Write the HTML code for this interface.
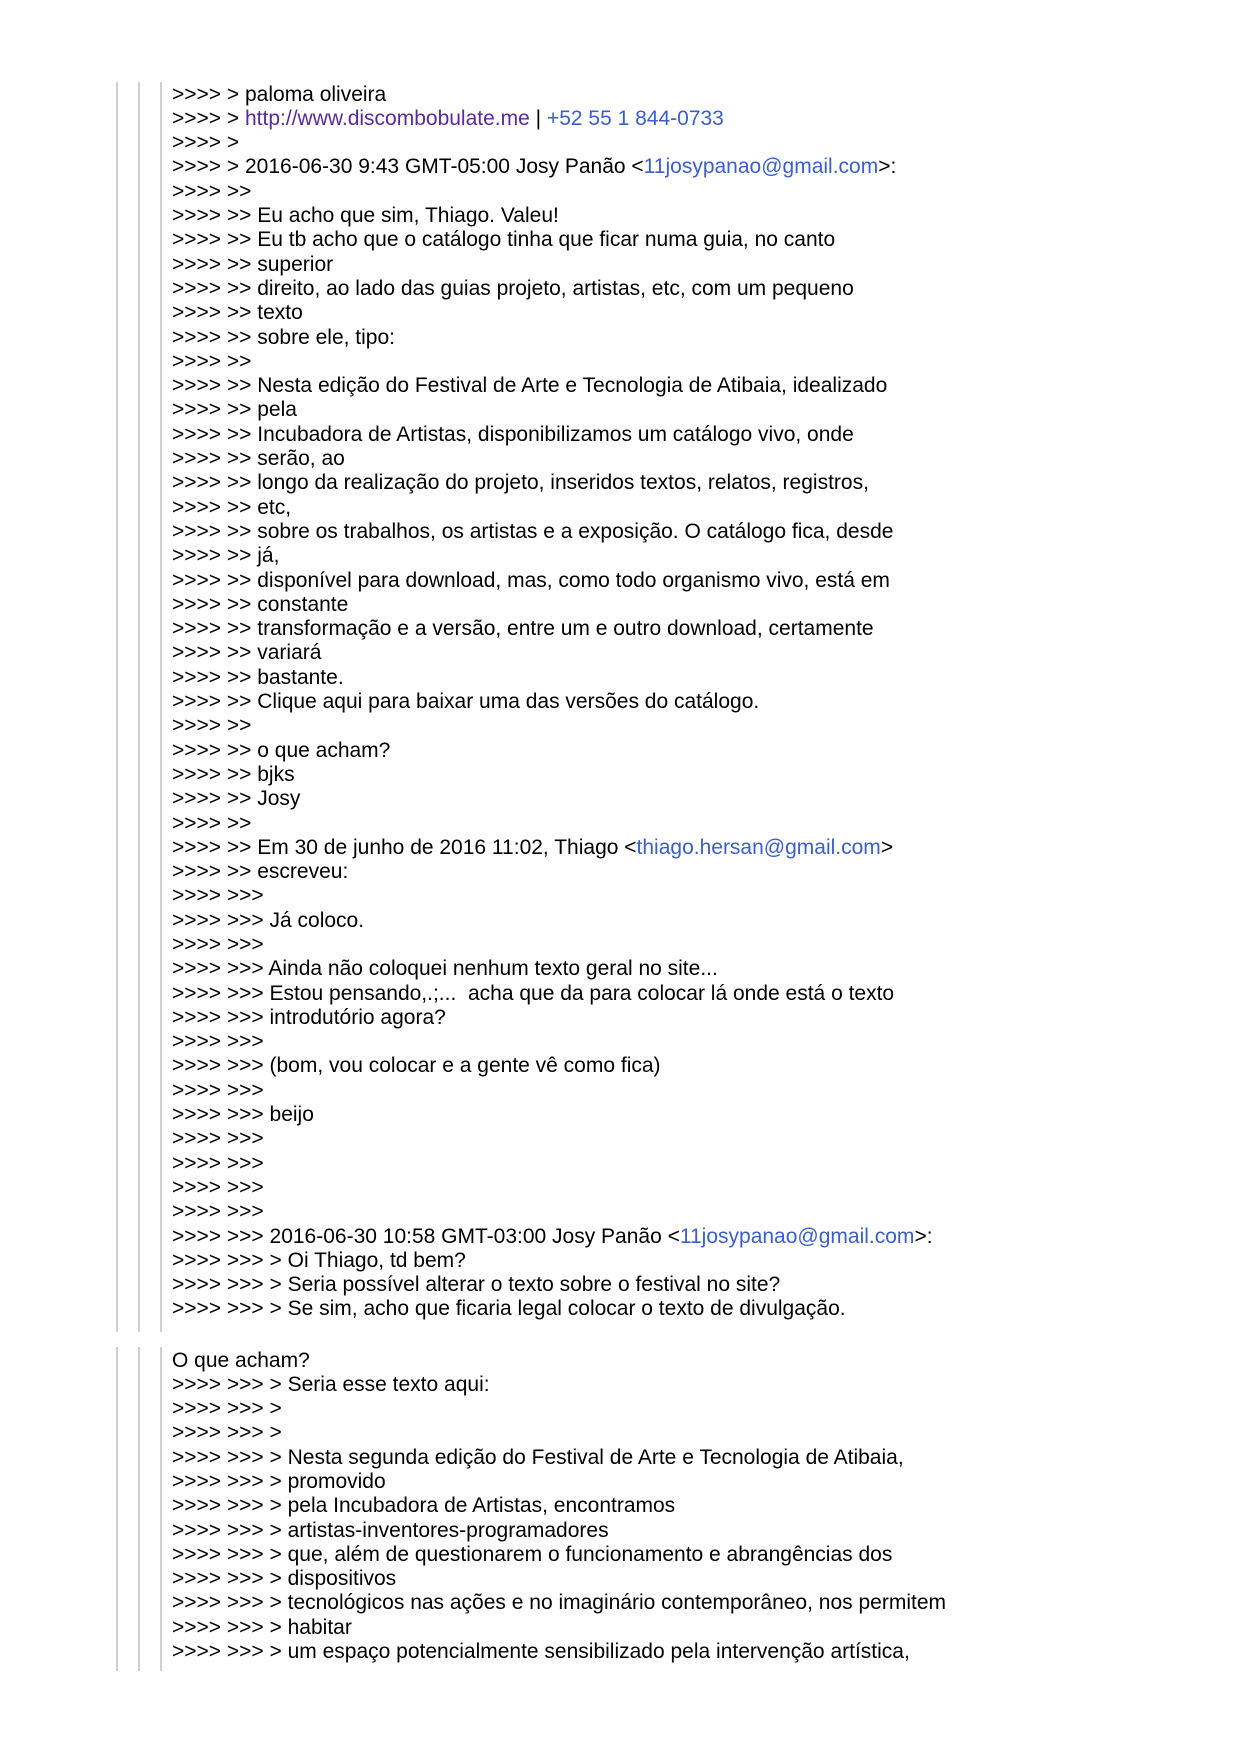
<!DOCTYPE html>
<html><head><meta charset="utf-8">
<style>
html,body{margin:0;padding:0;background:#fff;}
body{width:1240px;height:1753px;position:relative;overflow:hidden;font-family:"Liberation Sans",Arial,sans-serif;font-size:21px;color:#000;}
.bar{position:absolute;width:2px;background:#d0d0d0;}
.blk{position:absolute;left:172px;white-space:pre;}
.b1{top:82.6px;line-height:24.3px;}
.b2{top:1348.5px;line-height:24.3px;}
a{color:#3a5fcd;text-decoration:none;}
a.v{color:#5a2a9a;}
</style></head><body>
<div class="bar" style="left:116px;top:82px;height:1250px"></div>
<div class="bar" style="left:138px;top:82px;height:1250px"></div>
<div class="bar" style="left:160px;top:82px;height:1250px"></div>
<div class="bar" style="left:116px;top:1347px;height:324px"></div>
<div class="bar" style="left:138px;top:1347px;height:324px"></div>
<div class="bar" style="left:160px;top:1347px;height:324px"></div>
<div class="blk b1">&gt;&gt;&gt;&gt; &gt; paloma oliveira
&gt;&gt;&gt;&gt; &gt; <a class="v">http://www.discombobulate.me</a> | <a>+52 55 1 844-0733</a>
&gt;&gt;&gt;&gt; &gt;
&gt;&gt;&gt;&gt; &gt; 2016-06-30 9:43 GMT-05:00 Josy Panão &lt;<a>11josypanao@gmail.com</a>&gt;:
&gt;&gt;&gt;&gt; &gt;&gt;
&gt;&gt;&gt;&gt; &gt;&gt; Eu acho que sim, Thiago. Valeu!
&gt;&gt;&gt;&gt; &gt;&gt; Eu tb acho que o catálogo tinha que ficar numa guia, no canto
&gt;&gt;&gt;&gt; &gt;&gt; superior
&gt;&gt;&gt;&gt; &gt;&gt; direito, ao lado das guias projeto, artistas, etc, com um pequeno
&gt;&gt;&gt;&gt; &gt;&gt; texto
&gt;&gt;&gt;&gt; &gt;&gt; sobre ele, tipo:
&gt;&gt;&gt;&gt; &gt;&gt;
&gt;&gt;&gt;&gt; &gt;&gt; Nesta edição do Festival de Arte e Tecnologia de Atibaia, idealizado
&gt;&gt;&gt;&gt; &gt;&gt; pela
&gt;&gt;&gt;&gt; &gt;&gt; Incubadora de Artistas, disponibilizamos um catálogo vivo, onde
&gt;&gt;&gt;&gt; &gt;&gt; serão, ao
&gt;&gt;&gt;&gt; &gt;&gt; longo da realização do projeto, inseridos textos, relatos, registros,
&gt;&gt;&gt;&gt; &gt;&gt; etc,
&gt;&gt;&gt;&gt; &gt;&gt; sobre os trabalhos, os artistas e a exposição. O catálogo fica, desde
&gt;&gt;&gt;&gt; &gt;&gt; já,
&gt;&gt;&gt;&gt; &gt;&gt; disponível para download, mas, como todo organismo vivo, está em
&gt;&gt;&gt;&gt; &gt;&gt; constante
&gt;&gt;&gt;&gt; &gt;&gt; transformação e a versão, entre um e outro download, certamente
&gt;&gt;&gt;&gt; &gt;&gt; variará
&gt;&gt;&gt;&gt; &gt;&gt; bastante.
&gt;&gt;&gt;&gt; &gt;&gt; Clique aqui para baixar uma das versões do catálogo.
&gt;&gt;&gt;&gt; &gt;&gt;
&gt;&gt;&gt;&gt; &gt;&gt; o que acham?
&gt;&gt;&gt;&gt; &gt;&gt; bjks
&gt;&gt;&gt;&gt; &gt;&gt; Josy
&gt;&gt;&gt;&gt; &gt;&gt;
&gt;&gt;&gt;&gt; &gt;&gt; Em 30 de junho de 2016 11:02, Thiago &lt;<a>thiago.hersan@gmail.com</a>&gt;
&gt;&gt;&gt;&gt; &gt;&gt; escreveu:
&gt;&gt;&gt;&gt; &gt;&gt;&gt;
&gt;&gt;&gt;&gt; &gt;&gt;&gt; Já coloco.
&gt;&gt;&gt;&gt; &gt;&gt;&gt;
&gt;&gt;&gt;&gt; &gt;&gt;&gt; Ainda não coloquei nenhum texto geral no site...
&gt;&gt;&gt;&gt; &gt;&gt;&gt; Estou pensando,.;...  acha que da para colocar lá onde está o texto
&gt;&gt;&gt;&gt; &gt;&gt;&gt; introdutório agora?
&gt;&gt;&gt;&gt; &gt;&gt;&gt;
&gt;&gt;&gt;&gt; &gt;&gt;&gt; (bom, vou colocar e a gente vê como fica)
&gt;&gt;&gt;&gt; &gt;&gt;&gt;
&gt;&gt;&gt;&gt; &gt;&gt;&gt; beijo
&gt;&gt;&gt;&gt; &gt;&gt;&gt;
&gt;&gt;&gt;&gt; &gt;&gt;&gt;
&gt;&gt;&gt;&gt; &gt;&gt;&gt;
&gt;&gt;&gt;&gt; &gt;&gt;&gt;
&gt;&gt;&gt;&gt; &gt;&gt;&gt; 2016-06-30 10:58 GMT-03:00 Josy Panão &lt;<a>11josypanao@gmail.com</a>&gt;:
&gt;&gt;&gt;&gt; &gt;&gt;&gt; &gt; Oi Thiago, td bem?
&gt;&gt;&gt;&gt; &gt;&gt;&gt; &gt; Seria possível alterar o texto sobre o festival no site?
&gt;&gt;&gt;&gt; &gt;&gt;&gt; &gt; Se sim, acho que ficaria legal colocar o texto de divulgação.</div>
<div class="blk b2">O que acham?
&gt;&gt;&gt;&gt; &gt;&gt;&gt; &gt; Seria esse texto aqui:
&gt;&gt;&gt;&gt; &gt;&gt;&gt; &gt;
&gt;&gt;&gt;&gt; &gt;&gt;&gt; &gt;
&gt;&gt;&gt;&gt; &gt;&gt;&gt; &gt; Nesta segunda edição do Festival de Arte e Tecnologia de Atibaia,
&gt;&gt;&gt;&gt; &gt;&gt;&gt; &gt; promovido
&gt;&gt;&gt;&gt; &gt;&gt;&gt; &gt; pela Incubadora de Artistas, encontramos
&gt;&gt;&gt;&gt; &gt;&gt;&gt; &gt; artistas-inventores-programadores
&gt;&gt;&gt;&gt; &gt;&gt;&gt; &gt; que, além de questionarem o funcionamento e abrangências dos
&gt;&gt;&gt;&gt; &gt;&gt;&gt; &gt; dispositivos
&gt;&gt;&gt;&gt; &gt;&gt;&gt; &gt; tecnológicos nas ações e no imaginário contemporâneo, nos permitem
&gt;&gt;&gt;&gt; &gt;&gt;&gt; &gt; habitar
&gt;&gt;&gt;&gt; &gt;&gt;&gt; &gt; um espaço potencialmente sensibilizado pela intervenção artística,</div>
</body></html>
